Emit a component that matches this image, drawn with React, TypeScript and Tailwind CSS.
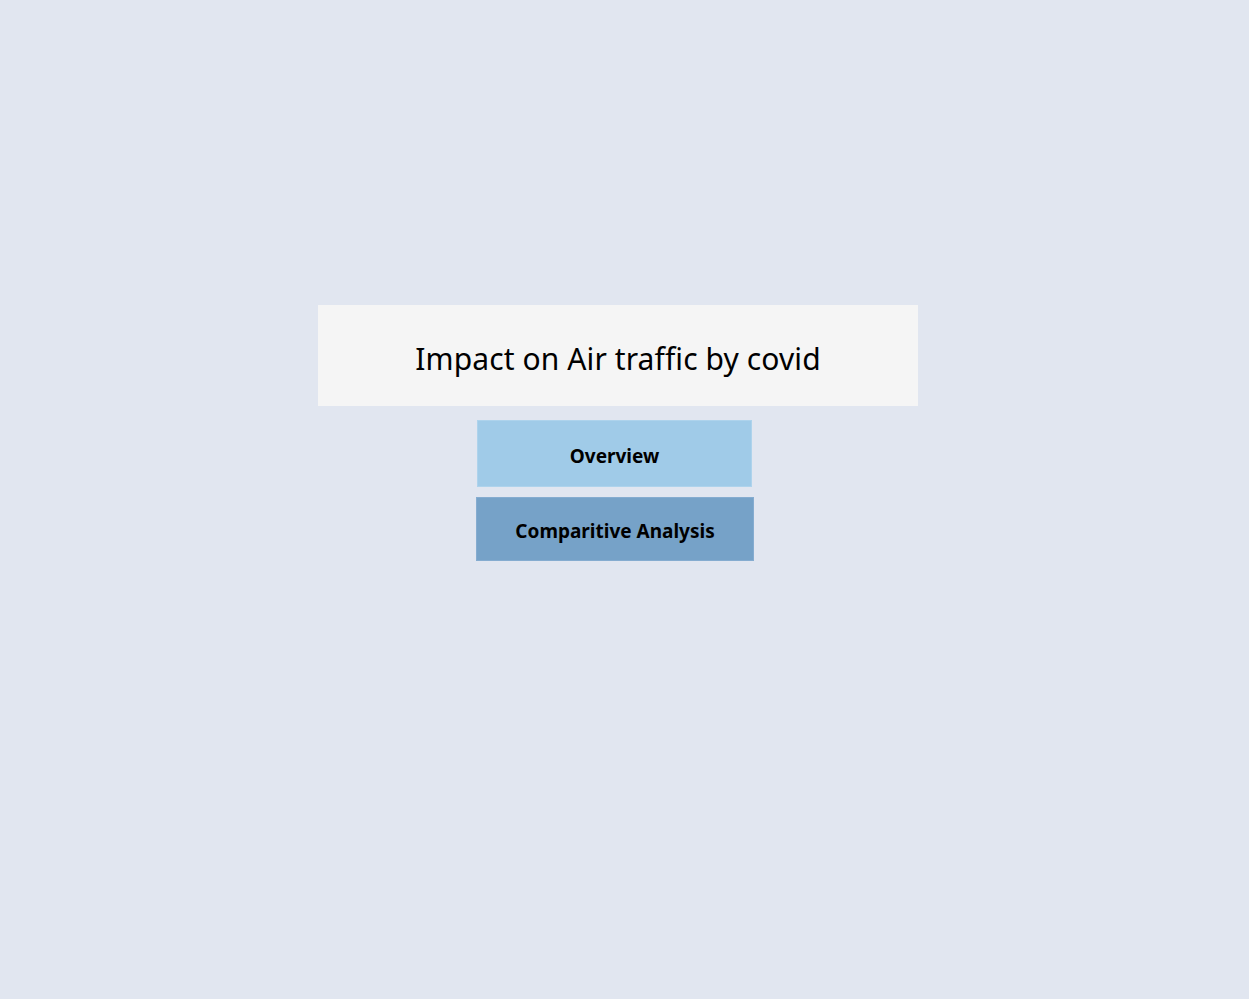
export default function App() {
  return (
    <div
      className="min-h-[999px] w-full bg-[#e1e6f0] pt-[305px] pl-[318px]"
      style={{ fontFamily: '"Noto Sans", "Open Sans", sans-serif' }}
    >
      <div className="flex h-[101px] w-[600px] items-center justify-center bg-[#f5f5f5] pt-[5px]">
        <h1 className="text-[30px] font-normal tracking-[0.1px] text-black">
          Impact on Air traffic by covid
        </h1>
      </div>
      <div className="mt-[14px] ml-[159px] flex h-[67px] w-[275px] items-center justify-center border border-[#aed3ec] bg-[#a0cbe8] pt-[6px]">
        <span className="text-[19px] font-bold text-black">Overview</span>
      </div>
      <div className="mt-[10px] ml-[158px] flex h-[64px] w-[278px] items-center justify-center border border-[#85acd0] bg-[#76a2c8] pt-[5px]">
        <span className="text-[19px] font-bold text-black">Comparitive Analysis</span>
      </div>
    </div>
  );
}
